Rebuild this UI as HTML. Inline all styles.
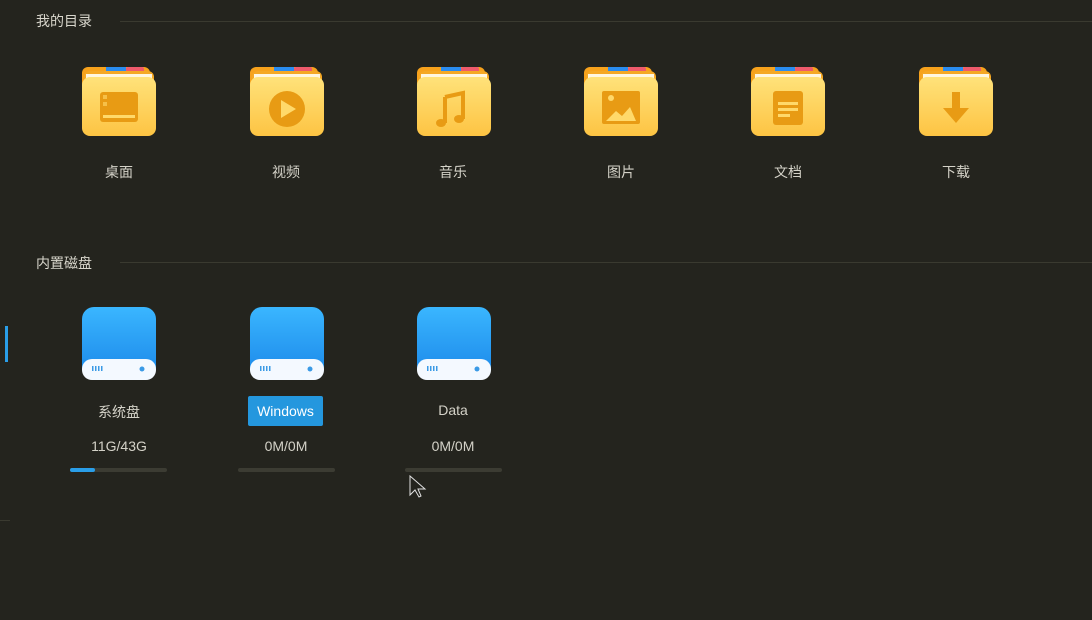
<!DOCTYPE html>
<html><head><meta charset="utf-8"><style>
body{margin:0;width:1092px;height:620px;background:#24241e;font-family:"Liberation Sans","Noto Sans CJK SC",sans-serif;color:#d4d2c8;position:relative;overflow:hidden}
.h{position:absolute;left:36px;font-size:14px;color:#d8d6cc}
.line{position:absolute;height:1px;background:#3a3a30}
.f{position:absolute;width:74px;height:70px}
.lbl{position:absolute;width:120px;text-align:center;font-size:14px}
.bar{position:absolute;width:97px;height:4px;background:#3c3c33;border-radius:2px}
</style></head><body>
<div class="h" style="top:11px">我的目录</div>
<div class="line" style="left:120px;right:0;top:21px"></div>
<div class="h" style="top:253px">内置磁盘</div>
<div class="line" style="left:120px;right:0;top:262px"></div>
<div style="position:absolute;left:5px;top:326px;width:3px;height:36px;background:#2a9ee8"></div>
<div class="line" style="left:0;width:10px;top:520px"></div>

<svg width="0" height="0" style="position:absolute"><defs>
<linearGradient id="fy" x1="0" y1="0" x2="0" y2="1"><stop offset="0" stop-color="#ffe27a"/><stop offset="1" stop-color="#fdc443"/></linearGradient>
<linearGradient id="bl" x1="0" y1="0" x2="0" y2="1"><stop offset="0" stop-color="#3ab6ff"/><stop offset="1" stop-color="#1a86e8"/></linearGradient>
<g id="folder">
<rect x="0" y="0" width="68" height="40" rx="6" fill="#f7a21c"/>
<rect x="24" y="0" width="20" height="6" fill="#2a8cf0"/>
<rect x="44" y="0" width="18" height="6" rx="2" fill="#ee5a6c"/>
<rect x="2" y="4" width="70" height="30" rx="6" fill="#f5a825"/>
<rect x="4" y="7" width="66" height="6" fill="#fff6e0"/>
<rect x="0" y="10" width="74" height="59" rx="8" fill="url(#fy)"/>
</g>
<g id="drive">
<rect x="0" y="0" width="74" height="73" rx="12" fill="url(#bl)"/>
<rect x="0" y="52" width="74" height="21" rx="10" fill="#f4f9ff"/>
<g fill="#3a9ae6"><rect x="10" y="59" width="1.5" height="5"/><rect x="13" y="59" width="1.5" height="5"/><rect x="16" y="59" width="1.5" height="5"/><rect x="19" y="59" width="1.5" height="5"/></g>
<circle cx="60" cy="62" r="2.5" fill="#3a9ae6"/>
</g>
</defs></svg>

<svg class="f" style="left:82px;top:67px"><use href="#folder"/><rect x="18" y="25" width="38" height="30" rx="3" fill="#e89b14"/><rect x="21" y="48" width="32" height="3" fill="#ffd96a"/><rect x="21" y="28" width="4" height="4" fill="#ffd96a" opacity=".6"/><rect x="21" y="35" width="4" height="4" fill="#ffd96a" opacity=".6"/></svg>
<svg class="f" style="left:250px;top:67px"><use href="#folder"/><circle cx="37" cy="42" r="18" fill="#e89b14"/><path d="M31 33 L46 42 L31 51Z" fill="#ffd96a"/></svg>
<svg class="f" style="left:417px;top:67px"><use href="#folder"/><path d="M28 30 L46 26 L46 52 M28 30 L28 56" stroke="#e89b14" stroke-width="4" fill="none"/><ellipse cx="24" cy="56" rx="5" ry="4" fill="#e89b14"/><ellipse cx="42" cy="52" rx="5" ry="4" fill="#e89b14"/></svg>
<svg class="f" style="left:584px;top:67px"><use href="#folder"/><rect x="18" y="24" width="38" height="33" rx="2" fill="#e89b14"/><path d="M22 54 L32 44 L38 49 L46 40 L52 54Z" fill="#ffd96a"/><circle cx="27" cy="31" r="3" fill="#ffd96a"/></svg>
<svg class="f" style="left:751px;top:67px"><use href="#folder"/><rect x="22" y="24" width="30" height="34" rx="3" fill="#e89b14"/><rect x="27" y="35" width="20" height="3" fill="#ffd96a"/><rect x="27" y="41" width="20" height="3" fill="#ffd96a"/><rect x="27" y="47" width="12" height="3" fill="#ffd96a"/></svg>
<svg class="f" style="left:919px;top:67px"><use href="#folder"/><rect x="33" y="25" width="8" height="17" fill="#e89b14"/><path d="M24 41 L50 41 L37 56Z" fill="#e89b14"/></svg>

<div class="lbl" style="left:59px;top:162px">桌面</div>
<div class="lbl" style="left:226px;top:162px">视频</div>
<div class="lbl" style="left:393px;top:162px">音乐</div>
<div class="lbl" style="left:561px;top:162px">图片</div>
<div class="lbl" style="left:728px;top:162px">文档</div>
<div class="lbl" style="left:896px;top:162px">下载</div>

<svg class="f" style="left:82px;top:307px;height:74px"><use href="#drive"/></svg>
<svg class="f" style="left:250px;top:307px;height:74px"><use href="#drive"/></svg>
<svg class="f" style="left:417px;top:307px;height:74px"><use href="#drive"/></svg>

<div class="lbl" style="left:59px;top:402px">系统盘</div>
<div style="position:absolute;left:248px;top:396px;width:75px;height:30px;background:#2497de;border-radius:2px;color:#fff;font-size:14px;line-height:31px;text-align:center">Windows</div>
<div class="lbl" style="left:393px;top:402px">Data</div>
<div class="lbl" style="left:59px;top:438px">11G/43G</div>
<div class="lbl" style="left:226px;top:438px">0M/0M</div>
<div class="lbl" style="left:393px;top:438px">0M/0M</div>
<div class="bar" style="left:70px;top:468px"><div style="width:25px;height:4px;background:#2a9ee8;border-radius:2px"></div></div>
<div class="bar" style="left:238px;top:468px"></div>
<div class="bar" style="left:405px;top:468px"></div>

<svg style="position:absolute;left:409px;top:475px" width="20" height="24"><path d="M1 1 L1 20 L6 15 L10 22 L12 21 L9 14 L16 14Z" fill="#24241e" stroke="#e0e0e0" stroke-width="1"/></svg>
</body></html>
